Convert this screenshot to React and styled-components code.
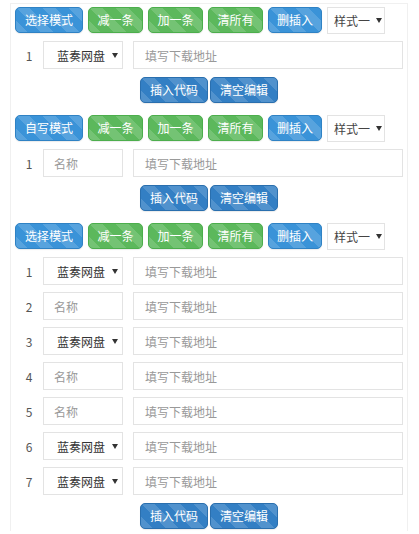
import React from 'react';
import styled, { createGlobalStyle, css } from 'styled-components';

const GlobalStyle = createGlobalStyle`
  html, body {
    margin: 0;
    padding: 0;
    background: #fff;
  }
  body {
    font-family: "Noto Sans CJK SC", "Noto Sans", sans-serif;
    font-size: 12px;
    color: #333;
  }
`;

const Panel = styled.div`
  margin: 3px 11px 0 10px;
  border: 1px solid #f0f0f0;
  border-bottom: none;
  padding: 3px 4px 2px 4px;
  display: flex;
  flex-direction: column;
  gap: 12px;
`;

const Section = styled.div`
  display: flex;
  flex-direction: column;
  gap: 8px;
`;

const Toolbar = styled.div`
  display: flex;
  align-items: center;
  gap: 5px;
  height: 26px;
`;

const stripes = css`
  background-image: linear-gradient(
    45deg,
    rgba(255, 255, 255, 0.15) 25%,
    transparent 25%,
    transparent 50%,
    rgba(255, 255, 255, 0.15) 50%,
    rgba(255, 255, 255, 0.15) 75%,
    transparent 75%,
    transparent
  );
  background-size: 26px 26px;
`;

const colors = {
  blue: { bg: '#3a93d8', border: '#2f82c4' },
  green: { bg: '#5cb85c', border: '#4cae4c' },
  dark: { bg: '#337fc4', border: '#2a6fae' },
};

const Btn = styled.button`
  height: 26px;
  width: ${(p) => p.$w}px;
  padding: 0;
  border: 1px solid ${(p) => colors[p.$tone].border};
  border-radius: 5px;
  background-color: ${(p) => colors[p.$tone].bg};
  ${stripes}
  color: #fff;
  font-family: "Noto Sans CJK SC", sans-serif;
  font-size: 12px;
  line-height: 24px;
  cursor: pointer;
  box-shadow: 0 1px 1px rgba(0, 0, 0, 0.08);
`;

const StyleSelect = styled.div`
  width: 58px;
  height: 27px;
  box-sizing: border-box;
  border: 1px solid #e3e3e3;
  background: #fff;
  display: flex;
  align-items: center;
  padding-left: 6px;
  gap: 6px;
  font-size: 12px;
  color: #444;
`;

const Caret = styled.span`
  display: inline-block;
  width: 0;
  height: 0;
  border-left: 3px solid transparent;
  border-right: 3px solid transparent;
  border-top: 5px solid #333;
  margin-top: 1px;
`;

const Rows = styled.div`
  display: flex;
  flex-direction: column;
  gap: 7px;
`;

const Row = styled.div`
  display: flex;
  align-items: center;
  height: 28px;
`;

const Num = styled.div`
  width: 28px;
  text-align: center;
  font-size: 12px;
  color: #555;
`;

const Field = styled.div`
  height: 28px;
  box-sizing: border-box;
  border: 1px solid #e3e3e3;
  background: #fff;
  display: flex;
  align-items: center;
  font-size: 12px;
`;

const Disk = styled(Field)`
  width: 80px;
  padding-left: 13px;
  gap: 7px;
  color: #333;
`;

const Name = styled(Field)`
  width: 80px;
  padding-left: 10px;
  color: #999;
`;

const Url = styled(Field)`
  flex: 1;
  margin-left: 10px;
  padding-left: 11px;
  color: #999;
`;

const Actions = styled.div`
  display: flex;
  justify-content: center;
  gap: 2px;
  height: 26px;
`;

const SectionBlock = ({ mode, rows }) => (
  <Section>
    <Toolbar>
      <Btn $tone="blue" $w={68}>{mode}</Btn>
      <Btn $tone="green" $w={55}>减一条</Btn>
      <Btn $tone="green" $w={55}>加一条</Btn>
      <Btn $tone="green" $w={55}>清所有</Btn>
      <Btn $tone="blue" $w={54}>删插入</Btn>
      <StyleSelect>
        样式一<Caret />
      </StyleSelect>
    </Toolbar>
    <Rows>
      {rows.map((kind, i) => (
        <Row key={i}>
          <Num>{i + 1}</Num>
          {kind === 'disk' ? (
            <Disk>
              蓝奏网盘<Caret />
            </Disk>
          ) : (
            <Name>名称</Name>
          )}
          <Url>填写下载地址</Url>
        </Row>
      ))}
    </Rows>
    <Actions>
      <Btn $tone="dark" $w={68}>插入代码</Btn>
      <Btn $tone="dark" $w={68}>清空编辑</Btn>
    </Actions>
  </Section>
);

const App = () => (
  <>
    <GlobalStyle />
    <Panel>
      <SectionBlock mode="选择模式" rows={['disk']} />
      <SectionBlock mode="自写模式" rows={['name']} />
      <SectionBlock
        mode="选择模式"
        rows={['disk', 'name', 'disk', 'name', 'name', 'disk', 'disk']}
      />
    </Panel>
  </>
);

export default App;
